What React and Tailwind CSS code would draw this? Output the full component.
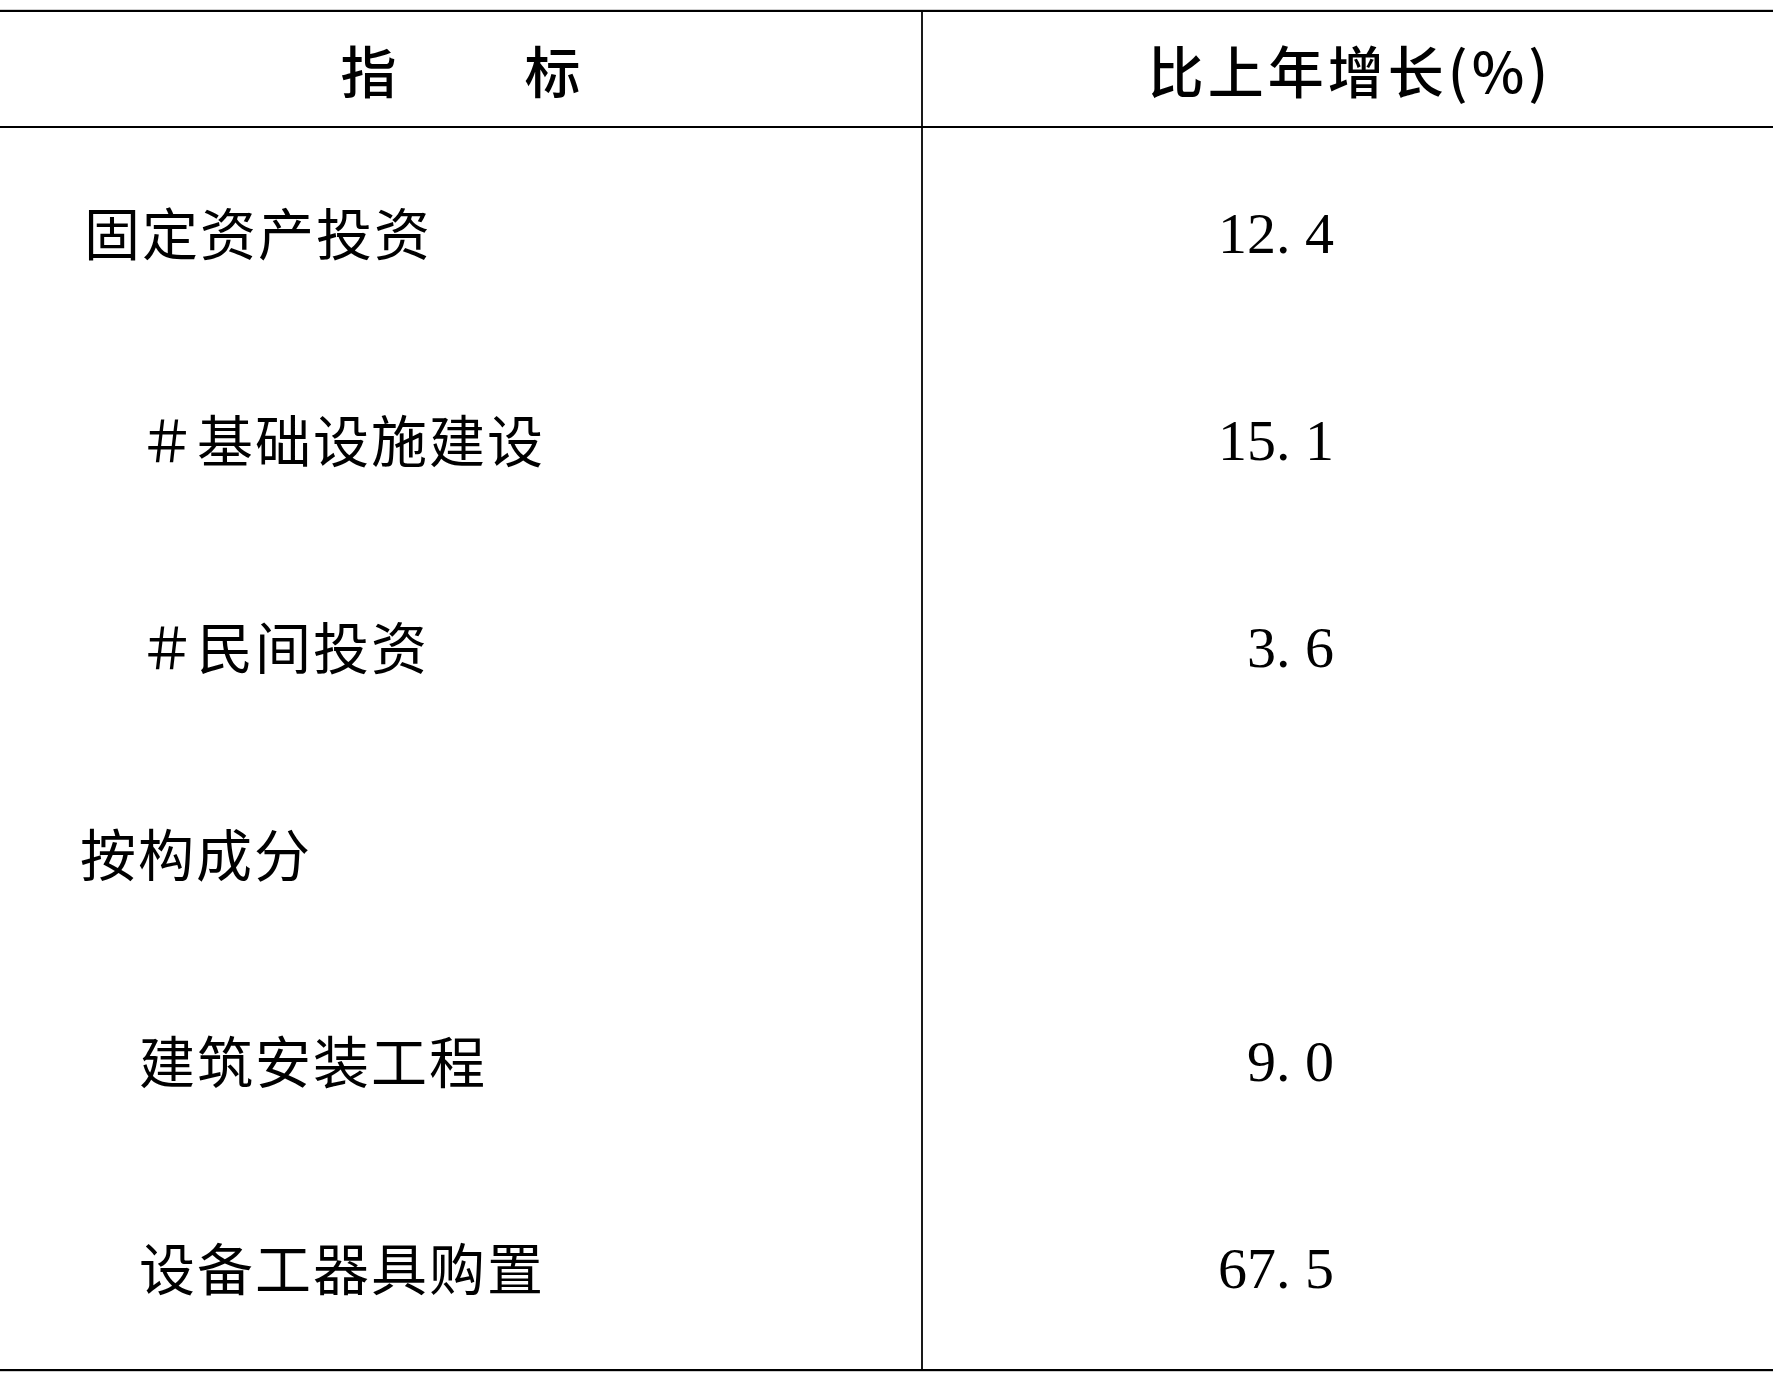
import React from "react";

// rows of the table: label, indent (px), growth value
const rows = [
  { label: "固定资产投资", pl: "pl-[84px]", value: "12.4" },
  { label: "＃基础设施建设", pl: "pl-[139px]", value: "15.1" },
  { label: "＃民间投资", pl: "pl-[139px]", value: "3.6" },
  { label: "按构成分", pl: "pl-[80px]", value: "" },
  { label: "建筑安装工程", pl: "pl-[139px]", value: "9.0" },
  { label: "设备工器具购置", pl: "pl-[139px]", value: "67.5" },
];

const cjk = "font-['Noto_Sans_CJK_SC',sans-serif]";

const Num = ({ value }) => {
  if (!value) return null;
  const [a, b] = value.split(".");
  return (
    <span className="inline-block pt-[6px] font-['Liberation_Serif',serif] text-[58px] leading-none text-black">
      {a}
      <span className="inline-block w-[0.5em] text-left">.</span>
      {b}
    </span>
  );
};

const App = () => {
  return (
    <div className="w-[1773px] h-[1377px] bg-white pt-[9px]">
      <div className="border-t border-[#cfcfcf]">
        <div className="border-t-2 border-b-2 border-black">
          {/* header */}
          <div className="grid grid-cols-[923px_1fr] h-[116px] border-b-2 border-black">
            <div className={`flex items-center justify-center gap-[128px] border-r-2 border-[#1a1a1a] ${cjk} text-[56px] font-medium leading-none text-black`}>
              <span>指</span>
              <span>标</span>
            </div>
            <div className={`flex items-center justify-center pl-[4px] ${cjk} text-[56px] font-medium leading-none tracking-[4px] text-black`}>
              比上年增长(%)
            </div>
          </div>

          {/* body */}
          <div className="grid grid-cols-[923px_1fr] grid-rows-6 h-[1241px]">
            {rows.map((row, idx) => (
              <React.Fragment key={idx}>
                <div className={`flex items-center border-r-2 border-[#1a1a1a] ${row.pl} ${cjk} text-[56px] leading-none tracking-[2px] text-black`}>
                  {row.label}
                </div>
                <div className="flex items-center justify-end pr-[439px]">
                  <Num value={row.value} />
                </div>
              </React.Fragment>
            ))}
          </div>
        </div>
      </div>
      <div className="border-t border-[#cfcfcf]"></div>
    </div>
  );
};

export default App;
